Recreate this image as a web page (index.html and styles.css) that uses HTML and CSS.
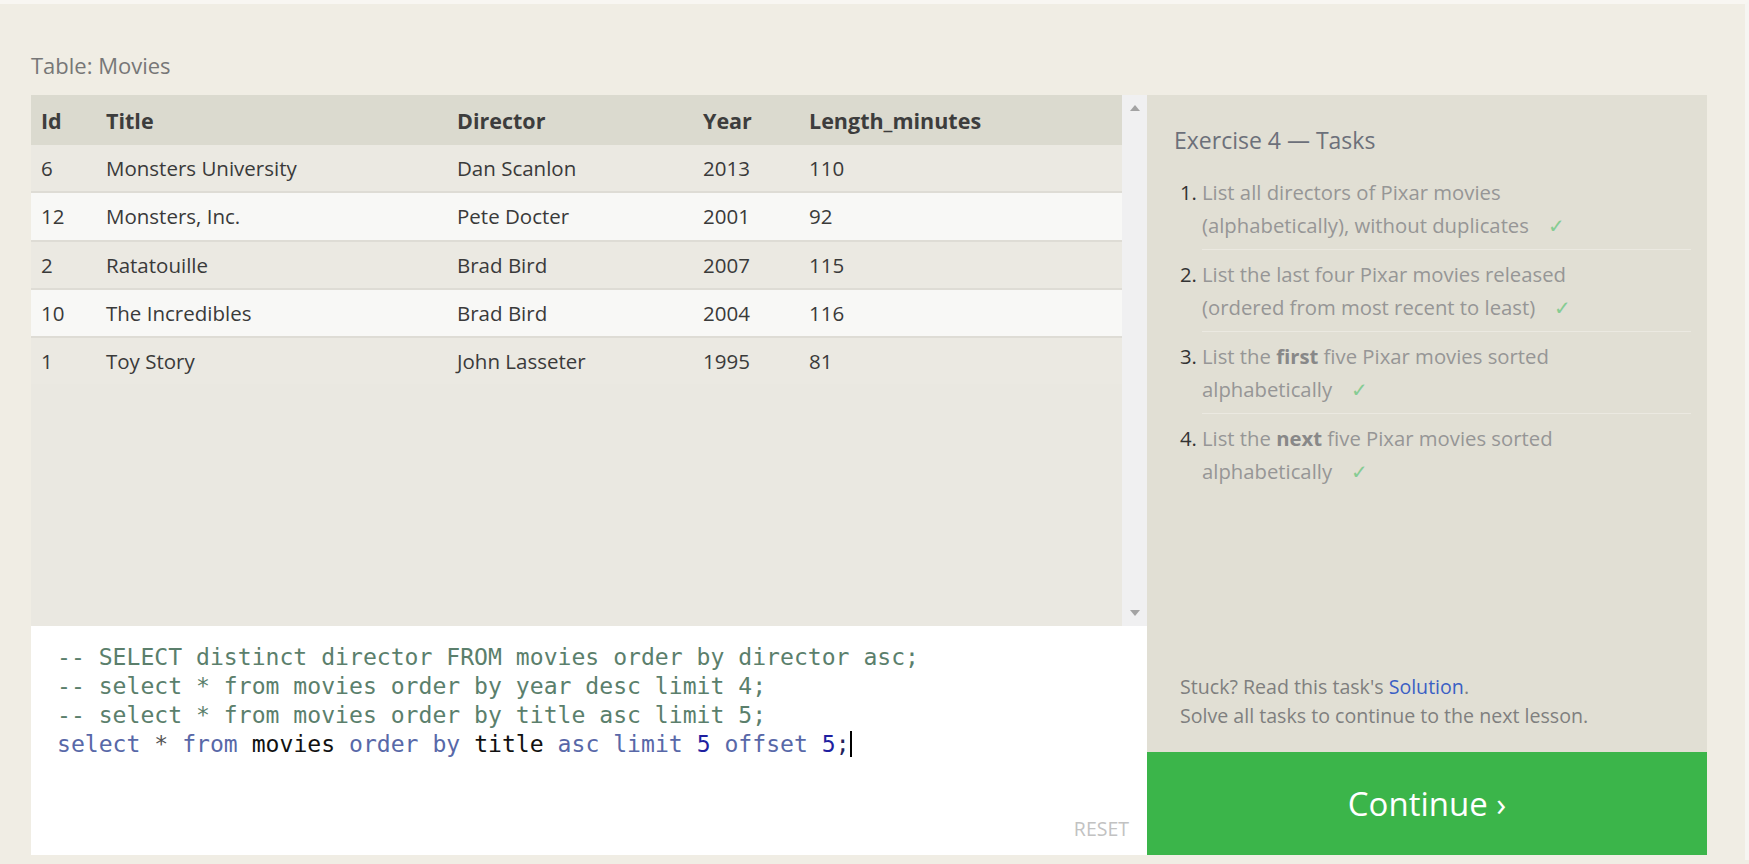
FILE: index.html
```html
<!DOCTYPE html>
<html>
<head>
<meta charset="utf-8">
<link rel="stylesheet" href="styles.css">
</head>
<body>
<div class="page">
  <div class="label">Table: Movies</div>
  <div class="main">
    <div class="left">
      <div class="table-wrap">
        <div class="table-area">
          <table class="movies">
            <colgroup>
              <col class="c-id"><col class="c-title"><col class="c-dir"><col class="c-year"><col>
            </colgroup>
            <thead>
              <tr><th>Id</th><th>Title</th><th>Director</th><th>Year</th><th>Length_minutes</th></tr>
            </thead>
            <tbody>
              <tr><td>6</td><td>Monsters University</td><td>Dan Scanlon</td><td>2013</td><td>110</td></tr>
              <tr><td>12</td><td>Monsters, Inc.</td><td>Pete Docter</td><td>2001</td><td>92</td></tr>
              <tr><td>2</td><td>Ratatouille</td><td>Brad Bird</td><td>2007</td><td>115</td></tr>
              <tr><td>10</td><td>The Incredibles</td><td>Brad Bird</td><td>2004</td><td>116</td></tr>
              <tr><td>1</td><td>Toy Story</td><td>John Lasseter</td><td>1995</td><td>81</td></tr>
            </tbody>
          </table>
        </div>
        <div class="scrollbar">
          <span class="arrow up"></span>
          <span class="arrow down"></span>
        </div>
      </div>
      <div class="editor">
        <pre class="code"><span class="cm">-- SELECT distinct director FROM movies order by director asc;</span>
<span class="cm">-- select * from movies order by year desc limit 4;</span>
<span class="cm">-- select * from movies order by title asc limit 5;</span>
<span class="kw">select</span> <span class="op">*</span> <span class="kw">from</span> <span class="id">movies</span> <span class="kw">order</span> <span class="kw">by</span> <span class="id">title</span> <span class="kw">asc</span> <span class="kw">limit</span> <span class="num">5</span> <span class="kw">offset</span> <span class="num">5</span><span class="pu">;</span><span class="cursor"></span></pre>
        <div class="reset">RESET</div>
      </div>
    </div>
    <div class="right">
      <div class="tasks">
        <h2 class="tasks-title">Exercise 4 — Tasks</h2>
        <ol class="task-list">
          <li class="task"><span class="num-mark">1.</span><span class="task-text">List all directors of Pixar movies (alphabetically), without duplicates <span class="check">✓</span></span></li>
          <li class="task"><span class="num-mark">2.</span><span class="task-text">List the last four Pixar movies released (ordered from most recent to least) <span class="check">✓</span></span></li>
          <li class="task"><span class="num-mark">3.</span><span class="task-text">List the <b>first</b> five Pixar movies sorted alphabetically <span class="check">✓</span></span></li>
          <li class="task last"><span class="num-mark">4.</span><span class="task-text">List the <b>next</b> five Pixar movies sorted alphabetically <span class="check">✓</span></span></li>
        </ol>
      </div>
      <div class="help">
        <div>Stuck? Read this task's <a class="link">Solution</a>.</div>
        <div>Solve all tasks to continue to the next lesson.</div>
      </div>
      <div class="continue">Continue ›</div>
    </div>
  </div>
</div>
</body>
</html>
```
FILE: styles.css
```css
html, body {
  margin: 0;
  padding: 0;
}
body {
  background: #f0ede4;
  font-family: "Open Sans", "Noto Sans", sans-serif;
  width: 1749px;
  height: 864px;
  overflow: hidden;
}
.page {
  border-top: 4px solid #f8f6f2;
  padding-left: 31px;
  height: 860px;
  box-sizing: border-box;
  border-right: 4px solid #f6f5f2;
  width: 1749px;
}
.label {
  margin-top: 47px;
  height: 28px;
  line-height: 28px;
  font-size: 22px;
  color: #777;
}
.main {
  margin-top: 16px;
  display: flex;
  height: 760px;
}
.left {
  width: 1116px;
  display: flex;
  flex-direction: column;
}
.table-wrap {
  height: 531px;
  display: flex;
  background: #eae8e1;
}
.table-area {
  flex: 1;
}
.movies {
  width: 100%;
  border-collapse: collapse;
  table-layout: fixed;
  font-size: 20.5px;
  color: #3a3a3a;
}
.c-id { width: 65px; }
.c-title { width: 351px; }
.c-dir { width: 246px; }
.c-year { width: 106px; }
.movies th {
  background: #dbdacf;
  height: 50px;
  text-align: left;
  font-weight: bold;
  font-size: 21.5px;
  padding: 0 0 0 10px;
  color: #3d3d3d;
}
.movies td {
  height: 46.3px;
  padding: 0 0 0 10px;
}
.movies tbody tr {
  background: #ebe9e2;
  border-bottom: 2px solid #dedcd5;
}
.movies tbody tr:nth-child(even) {
  background: #f8f8f6;
}
.movies tbody tr:last-child {
  border-bottom: none;
}
.scrollbar {
  width: 25px;
  background: #f0f0f1;
  display: flex;
  flex-direction: column;
  justify-content: space-between;
  align-items: center;
  padding: 10px 0 10px;
  box-sizing: border-box;
}
.arrow {
  width: 0;
  height: 0;
  border-left: 5px solid transparent;
  border-right: 5px solid transparent;
}
.arrow.up {
  border-bottom: 6px solid #a3a3a3;
}
.arrow.down {
  border-top: 6px solid #a3a3a3;
}
.editor {
  flex: 1;
  background: #fff;
  display: flex;
  flex-direction: column;
  padding: 17px 18px 14px 26px;
}
.code {
  margin: 0;
  font-family: "DejaVu Sans Mono", "Liberation Mono", monospace;
  font-size: 23.1px;
  line-height: 29px;
  color: #111;
}
.cm { color: #5b7f6c; }
.kw { color: #5868a8; }
.op { color: #555; }
.id { color: #111; }
.num { color: #1f1fa0; }
.pu { color: #22225a; }
.cursor {
  display: inline-block;
  width: 2px;
  height: 26px;
  background: #000;
  vertical-align: -5px;
}
.reset {
  margin-top: auto;
  align-self: flex-end;
  font-size: 19.5px;
  line-height: 24px;
  color: #c2c2c2;
}
.right {
  width: 560px;
  display: flex;
  flex-direction: column;
  background: #e1dfd4;
}
.tasks {
  flex: 1;
  padding: 31px 16px 0 27px;
}
.tasks-title {
  margin: 0;
  font-size: 23px;
  line-height: 28px;
  font-weight: normal;
  color: #6c707a;
}
.task-list {
  list-style: none;
  margin: 14px 0 0 0;
  padding: 0;
}
.task {
  display: flex;
  font-size: 20.3px;
  line-height: 33px;
  padding: 8px 0 7px;
  border-bottom: 1px solid #ebe9e1;
  color: #969696;
  margin-left: 28px;
}
.task.last {
  border-bottom: none;
}
.num-mark {
  width: 22px;
  margin-left: -22px;
  color: #333;
  flex: none;
}
.task-text {
  max-width: 440px;
}
.task-text b {
  color: #888;
}
.check {
  color: #86cc93;
  margin-left: 14px;
}
.help {
  padding: 0 0 22px 33px;
  font-size: 19.6px;
  line-height: 29px;
  color: #7f7f7f;
}
.link {
  color: #3b5fc4;
}
.continue {
  height: 103px;
  background: #3bb54a;
  color: #fff;
  font-size: 33px;
  display: flex;
  align-items: center;
  justify-content: center;
}
```
